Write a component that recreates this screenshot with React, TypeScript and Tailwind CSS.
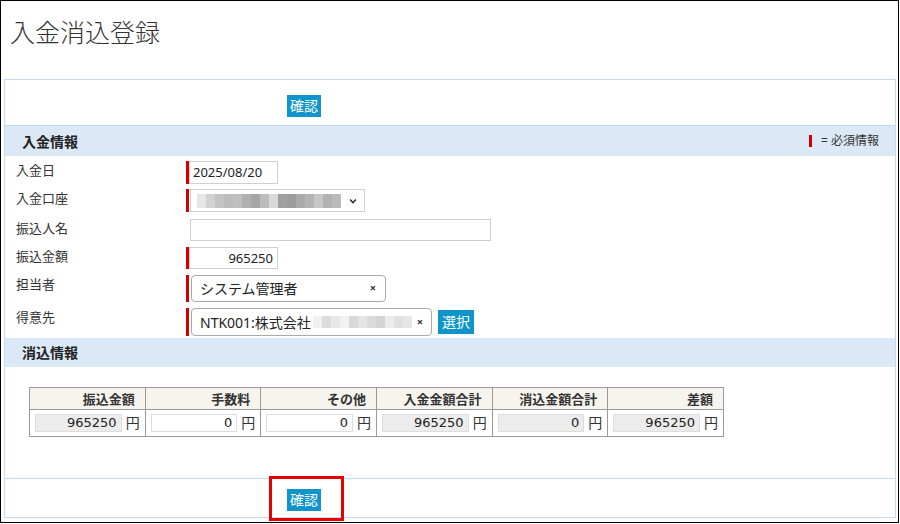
import React from "react";

const ACCOUNT_BLUR = [
  "bg-[#e6e6e6]", "bg-[#d2d2d2]", "bg-[#c4c4c4]", "bg-[#bcbcbc]", "bg-[#c0c0c0]",
  "bg-[#b0b0b0]", "bg-[#a6a6a6]", "bg-[#bdbdbd]", "bg-[#dadada]", "bg-[#a0a0a0]",
  "bg-[#9c9c9c]", "bg-[#aaaaaa]", "bg-[#b4b4b4]", "bg-[#c6c6c6]", "bg-[#b2b2b2]",
  "bg-[#bababa]",
];

const CLIENT_BLUR = [
  "bg-[#f0f0f0]", "bg-[#dcdcdc]", "bg-[#e8e8e8]", "bg-[#f2f2f2]", "bg-[#d8d8d8]",
  "bg-[#e4e4e4]", "bg-[#dadada]", "bg-[#d4d4d4]", "bg-[#ececec]", "bg-[#e0e0e0]",
  "bg-[#e6e6e6]",
];

const SUMMARY = [
  { label: "振込金額", value: "965250", editable: false },
  { label: "手数料", value: "0", editable: true },
  { label: "その他", value: "0", editable: true },
  { label: "入金金額合計", value: "965250", editable: false },
  { label: "消込金額合計", value: "0", editable: false },
  { label: "差額", value: "965250", editable: false },
];

const Required = () => <span className="w-[3px] self-stretch bg-[#d40000]" />;
const Spacer = () => <span className="w-[4px]" />;

const ConfirmButton = () => (
  <button className="h-[22px] px-[3px] bg-[#0f95c9] text-white text-[14px] leading-[22px]">
    確認
  </button>
);

const Row = ({ label, h, children }: { label: string; h: string; children: React.ReactNode }) => (
  <div className={`flex items-start ${h}`}>
    <div className="w-[181px] pl-[11px] text-[13px] leading-[18px] text-[#333]">{label}</div>
    {children}
  </div>
);

export default function App() {
  return (
    <div className="w-[900px] h-[524px] bg-white font-['Noto_Sans','Noto_Sans_CJK_JP',sans-serif] text-[#222]">
      <div className="w-[899px] h-[523px] border border-black">
        {/* タイトル */}
        <div className="h-[78px] pl-[9px] pt-[15px] text-[25px] leading-[32px] font-light text-[#333]">入金消込登録</div>

        <div className="relative ml-[3px] w-[892px] h-[439px] border border-[#c3dbf0] flex flex-col">
          {/* 上部ボタン */}
          <div className="h-[46px] border-b border-[#c3dbf0] pl-[282px] pt-[13px]">
            <ConfirmButton />
          </div>

          {/* 入金情報 */}
          <div className="h-[30px] bg-[#dbe9f7] flex items-center justify-between pl-[17px] pr-[16px]">
            <span className="text-[14px] font-bold">入金情報</span>
            <span className="flex items-center gap-[9px] text-[12px] text-[#333]">
              <span className="w-[3px] h-[12px] bg-[#d40000]" />= 必須情報
            </span>
          </div>

          <div className="pt-[5px]">
            <Row label="入金日" h="h-[28px]">
              <div className="flex h-[23px]">
                <Required />
                <div className="w-[89px] border border-[#cfcfcf] px-[3px] text-[13px] leading-[21px]">2025/08/20</div>
              </div>
            </Row>
            <Row label="入金口座" h="h-[30px]">
              <div className="flex h-[23px]">
                <Required />
                <span className="w-[1px]" />
                <div className="w-[175px] border border-[#cfcfcf] flex items-center pl-[6px] pr-[6px]">
                  <div className="flex h-[14px] flex-1 blur-[0.6px]">
                    {ACCOUNT_BLUR.map((c, i) => (
                      <span key={i} className={`w-[9px] h-full ${c}`} />
                    ))}
                  </div>
                  <svg width="10" height="10" viewBox="0 0 10 10" className="ml-[6px]">
                    <path d="M2 3.5 L5 6.5 L8 3.5" fill="none" stroke="#333" strokeWidth="1.6" />
                  </svg>
                </div>
              </div>
            </Row>
            <Row label="振込人名" h="h-[28px]">
              <div className="flex h-[22px]">
                <Spacer />
                <div className="w-[301px] border border-[#cfcfcf]" />
              </div>
            </Row>
            <Row label="振込金額" h="h-[28px]">
              <div className="flex h-[22px]">
                <Required />
                <div className="w-[89px] border border-[#cfcfcf] px-[4px] text-right text-[13px] leading-[20px]">965250</div>
              </div>
            </Row>
            <Row label="担当者" h="h-[33px]">
              <div className="flex h-[27px]">
                <Required />
                <span className="w-[2px]" />
                <div className="w-[195px] border border-[#aaa] rounded-[4px] flex items-center pl-[8px] pr-[9px] justify-between">
                  <span className="text-[14px]">システム管理者</span>
                  <span className="text-[11px] font-bold text-[#333]">×</span>
                </div>
              </div>
            </Row>
            <Row label="得意先" h="h-[30px]">
              <div className="flex h-[28px]">
                <Required />
                <span className="w-[2px]" />
                <div className="w-[241px] border border-[#aaa] rounded-[4px] flex items-center pl-[8px] pr-[8px]">
                  <span className="text-[14px]">NTK001:株式会社</span>
                  <div className="flex h-[12px] ml-[2px] blur-[0.5px]">
                    {CLIENT_BLUR.map((c, i) => (
                      <span key={i} className={`w-[9px] h-full ${c}`} />
                    ))}
                  </div>
                  <span className="ml-auto text-[11px] font-bold text-[#333]">×</span>
                </div>
                <button className="ml-[6px] mt-[2px] h-[24px] w-[36px] bg-[#0f95c9] text-white text-[14px] leading-[24px]">選択</button>
              </div>
            </Row>
          </div>

          {/* 消込情報 */}
          <div className="h-[29px] bg-[#dbe9f7] flex items-center pl-[17px]">
            <span className="text-[14px] font-bold">消込情報</span>
          </div>

          <div className="pl-[24px] pt-[20px] h-[112px] border-b border-[#c3dbf0]">
            <table className="w-[695px] table-fixed border-collapse font-['DejaVu_Sans','Noto_Sans_CJK_JP',sans-serif]">
              <thead>
                <tr className="h-[22px] bg-[#f7f4ee]">
                  {SUMMARY.map((s) => (
                    <th key={s.label} className="border border-[#9a9a9a] pr-[10px] text-right text-[13px] font-bold text-[#333] font-['Noto_Sans_CJK_JP',sans-serif]">
                      {s.label}
                    </th>
                  ))}
                </tr>
              </thead>
              <tbody>
                <tr className="h-[27px]">
                  {SUMMARY.map((s) => (
                    <td key={s.label} className="border border-[#9a9a9a] px-[5px]">
                      <div className="flex items-center gap-[4px]">
                        <div
                          className={`w-[87px] h-[18px] border border-[#ddd] pr-[4px] text-right text-[13px] leading-[16px] ${
                            s.editable ? "bg-white" : "bg-[#ececec]"
                          }`}
                        >
                          {s.value}
                        </div>
                        <span className="text-[14px] text-[#333]">円</span>
                      </div>
                    </td>
                  ))}
                </tr>
              </tbody>
            </table>
          </div>

          {/* 下部ボタン */}
          <div className="flex-1 pl-[282px] pt-[8px]">
            <ConfirmButton />
          </div>

          {/* 注目枠 */}
          <div className="absolute left-[264px] top-[396px] w-[75px] h-[45px] border-[3px] border-[#e60000]" />
        </div>
      </div>
    </div>
  );
}
